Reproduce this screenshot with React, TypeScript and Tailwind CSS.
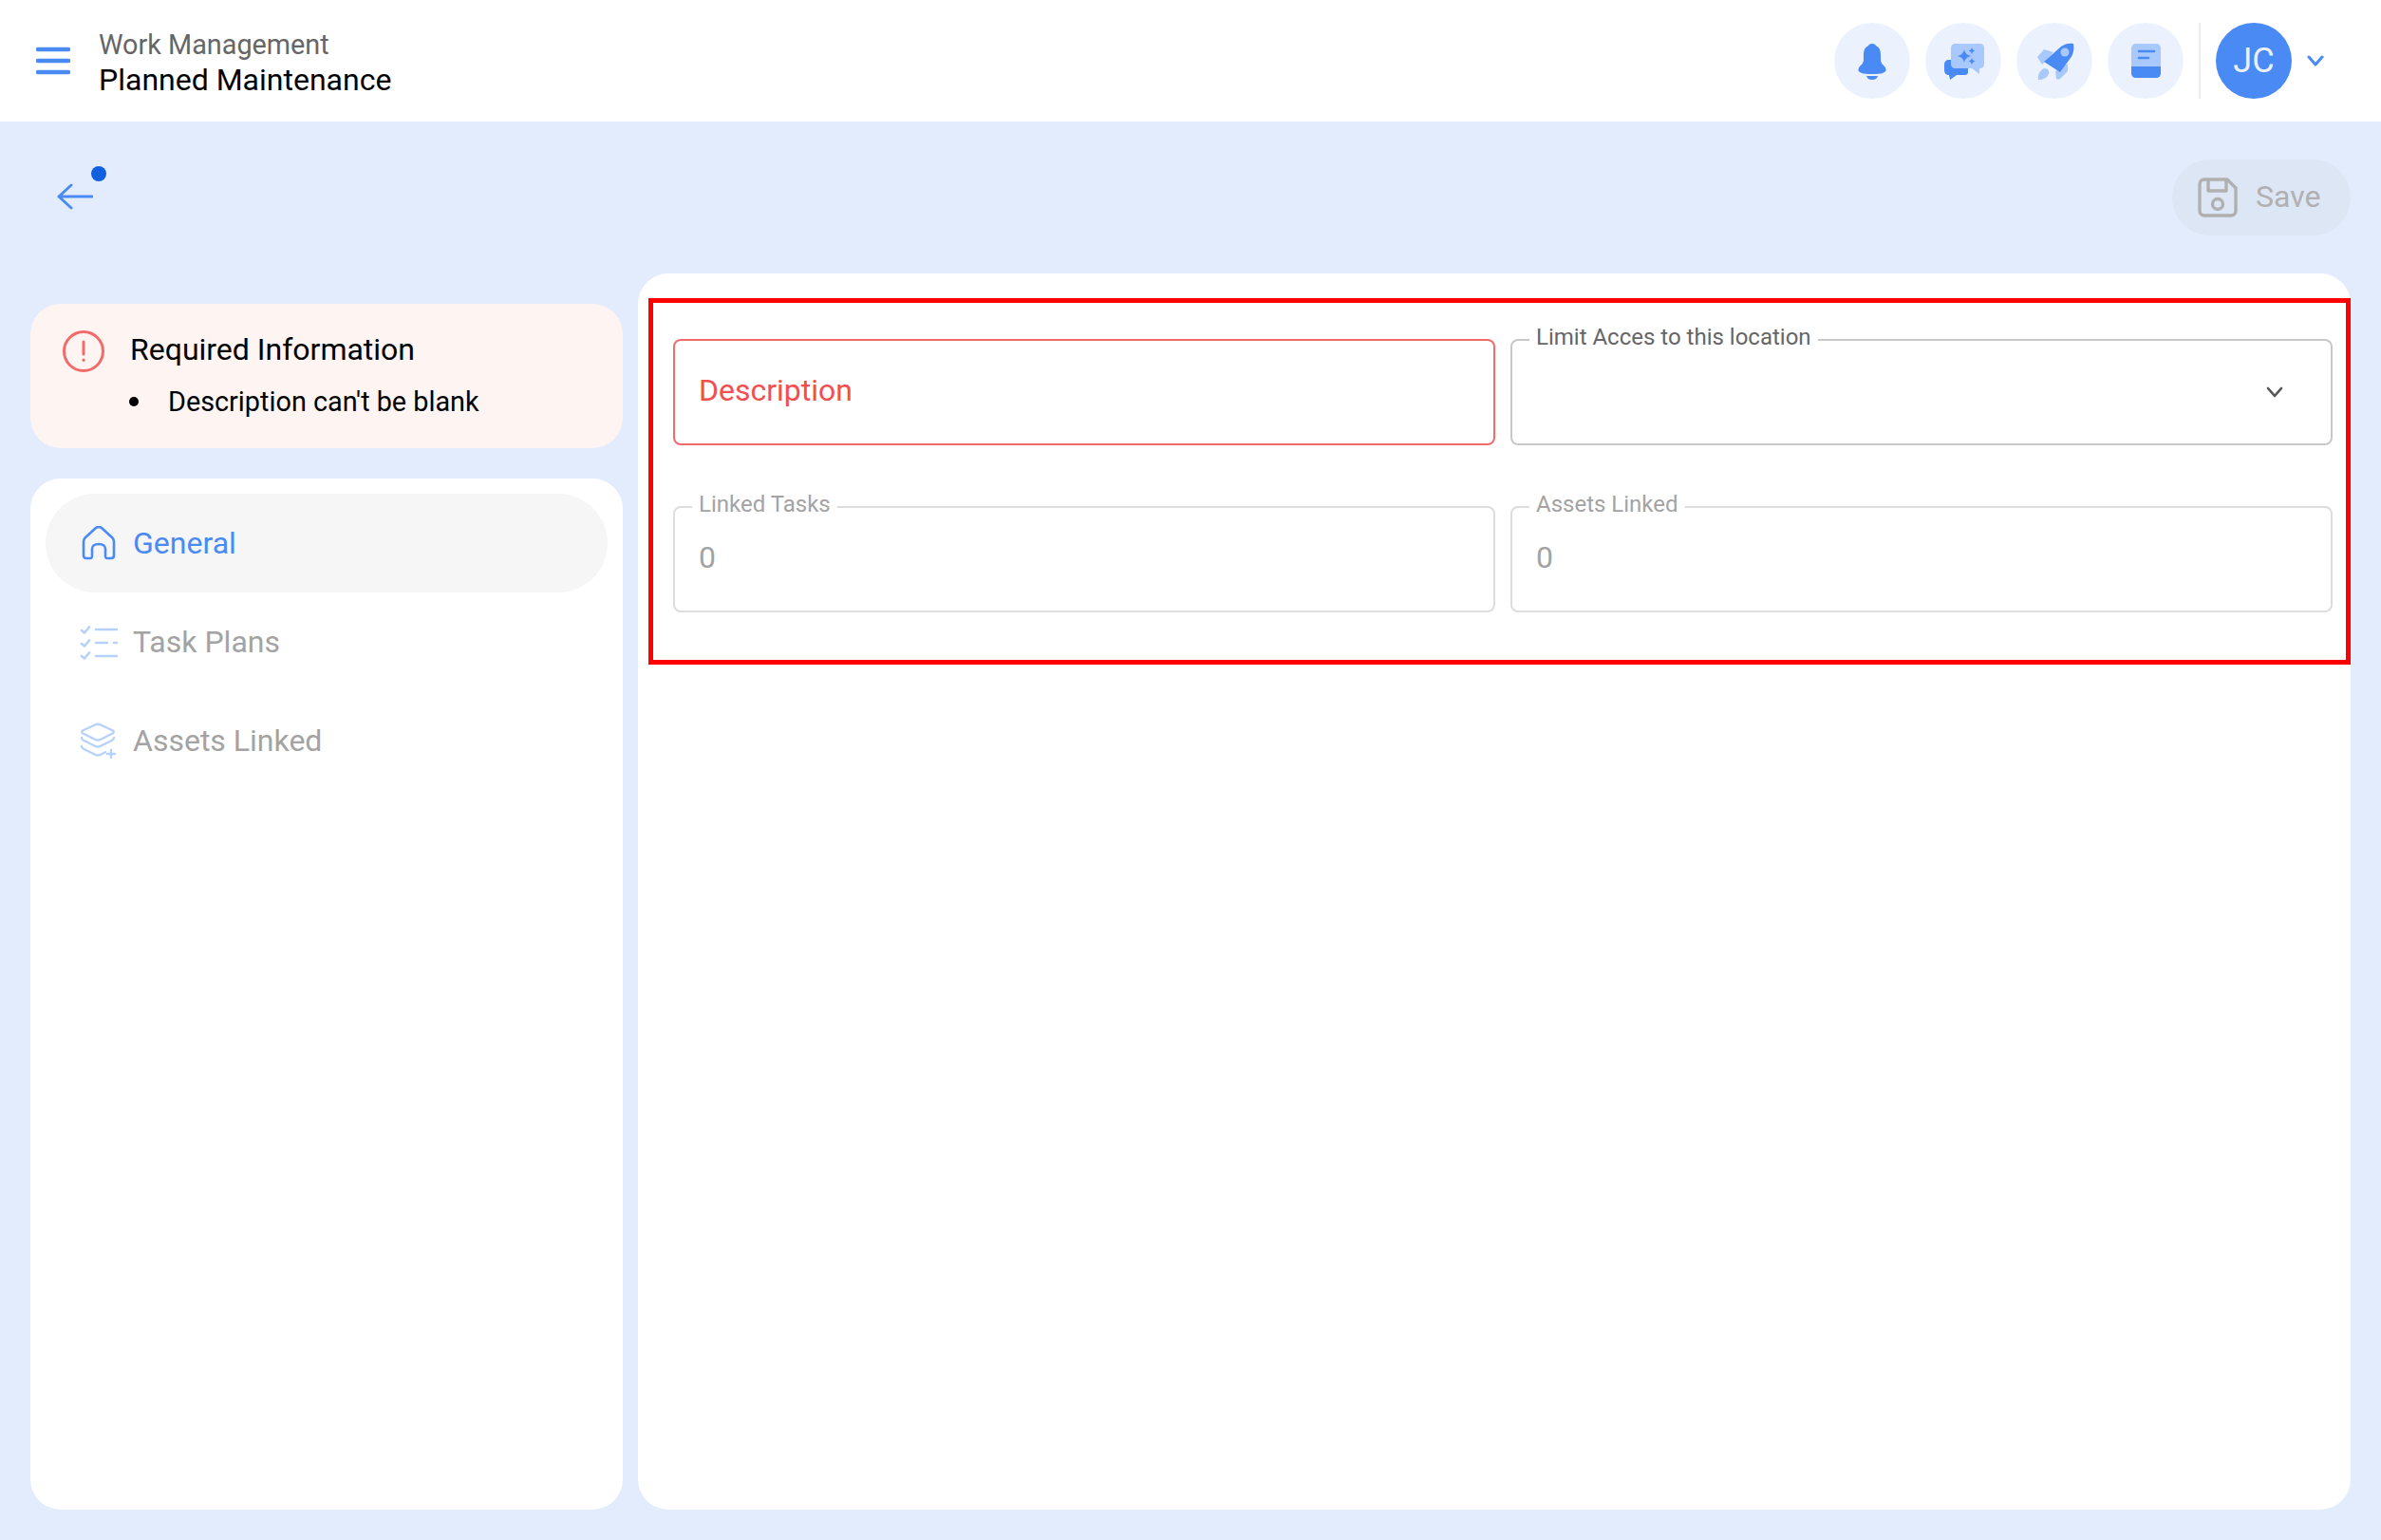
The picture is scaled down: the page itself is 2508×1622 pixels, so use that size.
import React from 'react';

const BLUE = '#4a8af4';
const LIGHT = '#a9c8fb';

const BellIcon = () => (
    <svg width="44" height="44" viewBox="0 0 44 44" fill={BLUE}>
        <path d="M22 4c3 0 4 2 5 3c3 1 4 5 4 9v5c0 3 2 5 4 7c2 2 2 5 0 6c-3 2-8 2-13 2s-10 0-13-2c-2-1-2-4 0-6c2-2 4-4 4-7v-5c0-4 1-8 4-9c1-1 2-3 5-3z" />
        <path d="M16 38h12c-1 3-3 4-6 4s-5-1-6-4z" />
    </svg>
);

const ChatIcon = () => (
    <svg width="44" height="44" viewBox="0 0 44 44">
        <path fill={BLUE} d="M7 21h17c2 0 3 1 3 3v10c0 1-1 3-3 3h-9l-7 5l-1-5c-3 0-5-2-5-5v-6c0-3 2-5 5-5z" />
        <path fill={LIGHT} d="M13 4h27c2 0 4 2 4 4v18c0 2-2 4-4 4h-1v6l-8-6H13c-2 0-4-2-4-4V8c0-2 2-4 4-4z" />
        <path fill={BLUE} d="M23 10c1 4 3 6 7 7c-4 1-6 3-7 7c-1-4-3-6-7-7c4-1 6-3 7-7zM31 8c.5 2 1.500 3 3.500 3.500c-2 .5-3 1.500-3.500 3.500c-.5-2-1.500-3-3.500-3.500c2-.5 3-1.500 3.500-3.500zM31 19c.5 2 1.500 3 3.500 3.500c-2 .5-3 1.500-3.500 3.500c-.5-2-1.500-3-3.500-3.500c2-.5 3-1.500 3.500-3.500z" />
    </svg>
);

const RocketIcon = () => (
    <svg width="44" height="44" viewBox="0 0 44 44">
        <path fill={LIGHT} d="M4 18l7-8l10 3l-12 13zM36 25v8l-8 8c-1 1-3 1-4 0l-1-8z" />
        <path fill={LIGHT} d="M5 42c-1-5 2-11 7-12c3 0 5 3 4 6c-2 4-6 6-11 6z" />
        <path fill={BLUE} d="M11 23L29 7c4-3 9-4 13-3c1 5 0 11-3 15L28 34z" />
        <circle cx="33" cy="13" r="4.500" fill={LIGHT} />
    </svg>
);

const BookIcon = () => (
    <svg width="44" height="44" viewBox="0 0 44 44" fill="none">
        <path fill={LIGHT} d="M12 4h21c3 0 5 2 5 5v20H7V9c0-3 2-5 5-5z" />
        <path fill={BLUE} d="M7 28h31v7c0 3-2 5-5 5H12c-3 0-5-2-5-5z" />
        <path stroke={BLUE} strokeWidth="2.500" strokeLinecap="round" d="M15 12h16M15 19h10" />
    </svg>
);

const HeaderCircle: React.FC<{ children: React.ReactNode }> = ({ children }) => (
    <button className="w-20 h-20 rounded-full bg-[#ebf2fe] flex items-center justify-center">{children}</button>
);

const HomeIcon = () => (
    <svg width="36" height="36" viewBox="0 0 36 36" fill="none" stroke={BLUE} strokeWidth="2.600" strokeLinejoin="round">
        <path d="M2 16c0-2 1-3 2-4L15 2c2-1.500 4-1.500 6 0l11 10c1 1 2 2 2 4v15c0 2-1 3-3 3h-4c-2 0-2-1-2-3v-7c0-3-3-5-7-5s-7 2-7 5v7c0 2 0 3-2 3H5c-2 0-3-1-3-3z" />
    </svg>
);

const TasksIcon = () => (
    <svg width="40" height="38" viewBox="0 0 40 38" fill="none" stroke="#b6d1fc" strokeWidth="2.600" strokeLinecap="round" strokeLinejoin="round">
        <path d="M17 6h22M17 20h12M36 20h3M17 34h22" />
        <path d="M2 7l3 2.500l5-6M2 21l3 2.500l5-6M2 34l3 2.500l5-6" />
    </svg>
);

const StackIcon = () => (
    <svg width="40" height="38" viewBox="0 0 40 38" fill="none" stroke="#b6d1fc" strokeWidth="2.400" strokeLinecap="round" strokeLinejoin="round">
        <path d="M16 2.500c2-1 4-1 6 0l13 6c1 .7 1 2 0 2.700l-13 6.500c-2 1-4 1-6 0L3 11.200c-1-.7-1-2 0-2.700z" />
        <path d="M2 16c0 1 .5 2 2 2.800l12 6c2 1 4 1 6 0l12-6c1.500-.8 2-1.800 2-2.800" />
        <path d="M2 25c0 1 .5 2 2 2.800l12 6c2 1 4 1 6 0l5-2.500" />
        <path d="M33 29v8M29 33h8" />
    </svg>
);

const Field: React.FC<{ label?: string; labelColor?: string; border: string; value?: string; children?: React.ReactNode }> = ({ label, labelColor, border, value, children }) => (
    <div className={`relative h-[112px] rounded-lg border-2 flex items-center justify-between pl-[25px] pr-[50px] ${border}`}>
        {label && (
            <span className={`absolute -top-[18px] left-[18px] bg-white px-[7px] text-[24px] leading-[28px] ${labelColor}`}>{label}</span>
        )}
        {value && <span className="text-[32px] text-[#a3a3a3] pb-[4px]">{value}</span>}
        {children}
    </div>
);

const NavItem: React.FC<{ icon: React.ReactNode; label: string; active?: boolean }> = ({ icon, label, active }) => (
    <button className={`h-[104px] w-full rounded-full flex items-center text-left pl-[36px] text-[32px] ${active ? 'bg-[#f6f6f6] text-[#4a8af4]' : 'text-[#a3a3a3]'}`}>
        <span className="w-[40px] h-[40px] flex items-center justify-center shrink-0">{icon}</span>
        <span className="ml-[16px]">{label}</span>
    </button>
);

export default function App() {
    return (
        <div className="w-full h-[1622px] flex flex-col bg-[#e2ecfd] font-['Roboto',sans-serif]">
            <header className="h-[128px] shrink-0 bg-white flex items-center pl-[38px] pr-[60px]">
                <svg width="36" height="30" viewBox="0 0 36 30" fill="none" stroke={BLUE} strokeWidth="4.500" strokeLinecap="round">
                    <path d="M2 3h32M2 15h32M2 27h32" />
                </svg>
                <div className="ml-[30px] pt-[3px] flex flex-col">
                    <span className="text-[28.800px] leading-[36px] text-[#666666]">Work Management</span>
                    <span className="text-[32px] leading-[38px] text-black">Planned Maintenance</span>
                </div>
                <div className="ml-auto flex items-center gap-4">
                    <HeaderCircle><BellIcon /></HeaderCircle>
                    <HeaderCircle><ChatIcon /></HeaderCircle>
                    <HeaderCircle><RocketIcon /></HeaderCircle>
                    <HeaderCircle><BookIcon /></HeaderCircle>
                    <div className="w-[2px] h-20 bg-[#ececec]" />
                    <div className="w-20 h-20 rounded-full bg-[#4a8af4] flex items-center justify-center text-[36px] text-[#e8f0fe]">JC</div>
                    <svg width="18" height="12" viewBox="0 0 18 12" fill="none" stroke={BLUE} strokeWidth="3" strokeLinecap="round" strokeLinejoin="round">
                        <path d="M2 2l7 8l7-8" />
                    </svg>
                </div>
            </header>

            <div className="h-[160px] shrink-0 flex items-center justify-between pl-[60px] pr-8">
                <div className="relative -mt-[3px]">
                    <svg width="38" height="28" viewBox="0 0 38 28" fill="none" stroke={BLUE} strokeWidth="3" strokeLinecap="round" strokeLinejoin="round">
                        <path d="M37 14H2M15 2L2 14l13 12" />
                    </svg>
                    <span className="absolute -top-[18px] left-[36px] w-4 h-4 rounded-full bg-[#1160e0]" />
                </div>
                <button className="w-[188px] h-20 rounded-full bg-[#dce6f5] flex items-center pl-[27px] text-[32px] text-[#b0b0b0]">
                    <svg width="42" height="42" viewBox="0 0 42 42" fill="none" stroke="#b0b0b0" strokeWidth="3.400" strokeLinejoin="round">
                        <path d="M7 2h24l9 9v24c0 3-2 5-5 5H7c-3 0-5-2-5-5V7c0-3 2-5 5-5z" />
                        <path d="M11 2v12h19V2" />
                        <circle cx="21" cy="28" r="5.500" />
                    </svg>
                    <span className="ml-[19px] pb-[2px]">Save</span>
                </button>
            </div>

            <main className="flex-1 flex gap-4 px-8 pb-8 min-h-0">
                <aside className="w-[624px] shrink-0 flex flex-col gap-8 pt-8">
                    <section className="h-[152px] rounded-[32px] bg-[#fef4f2] flex pl-[34px] pt-[28px]">
                        <svg width="44" height="44" viewBox="0 0 44 44" fill="none" stroke="#f26b6b" strokeWidth="3" strokeLinecap="round" className="shrink-0">
                            <circle cx="22" cy="22" r="20.500" />
                            <path d="M22 12v13M22 31v.5" />
                        </svg>
                        <div className="ml-[27px] text-black">
                            <div className="text-[32px] leading-[40px]">Required Information</div>
                            <ul className="mt-[19px] text-[28.800px] leading-[32px]">
                                <li className="flex items-center">
                                    <span className="w-[10px] h-[10px] rounded-full bg-black ml-[-1px] mr-[31px]" />
                                    Description can't be blank
                                </li>
                            </ul>
                        </div>
                    </section>
                    <nav className="flex-1 rounded-[32px] bg-white p-4 flex flex-col">
                        <NavItem icon={<HomeIcon />} label="General" active />
                        <NavItem icon={<TasksIcon />} label="Task Plans" />
                        <NavItem icon={<StackIcon />} label="Assets Linked" />
                    </nav>
                </aside>

                <section className="flex-1 rounded-[32px] bg-white pt-[26px] pl-[11px]">
                    <div className="border-[5px] border-[#ff0000] pt-[38px] pb-[50px] pl-[21px] pr-[14px] grid grid-cols-2 gap-x-4 gap-y-[64px]">
                        <Field border="border-[#f26b6b]">
                            <span className="text-[32px] text-[#f44e4e] pb-[4px]">Description</span>
                        </Field>
                        <Field label="Limit Acces to this location" labelColor="text-[#666666]" border="border-[#c8c8c8]">
                            <span />
                            <svg width="18" height="12" viewBox="0 0 18 12" fill="none" stroke="#555555" strokeWidth="2.600" strokeLinecap="round" strokeLinejoin="round">
                                <path d="M2 2l7 8l7-8" />
                            </svg>
                        </Field>
                        <Field label="Linked Tasks" labelColor="text-[#a3a3a3]" border="border-[#dddddd]" value="0" />
                        <Field label="Assets Linked" labelColor="text-[#a3a3a3]" border="border-[#dddddd]" value="0" />
                    </div>
                </section>
            </main>
        </div>
    );
}
